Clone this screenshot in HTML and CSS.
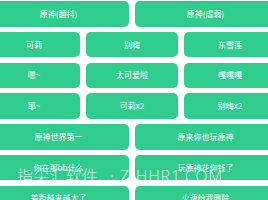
FILE: index.html
```html
<!DOCTYPE html>
<html lang="zh">
<head>
<meta charset="utf-8">
<link rel="stylesheet" href="styles.css">
</head>
<body>
<div class="board">
  <div class="btn half">原神(翻抖)</div>
  <div class="btn half">原神(虐弱)</div>
  <div class="btn third">可莉</div>
  <div class="btn third">别嗨</div>
  <div class="btn third">东雪莲</div>
  <div class="btn third">嗯~</div>
  <div class="btn third">太可爱啦</div>
  <div class="btn third">嘎嘎嘎</div>
  <div class="btn third">耶~</div>
  <div class="btn third">可莉x2</div>
  <div class="btn third">别嗨x2</div>
  <div class="btn half">原神世界第一</div>
  <div class="btn half">原来你也玩原神</div>
  <div class="btn half">你在那bb什么</div>
  <div class="btn half">玩原神花你钱了</div>
  <div class="btn half">差距越来越大了</div>
  <div class="btn half">火速给我删除</div>
</div>
<div class="watermark"><span class="wm-cn">指尖汇软件</span><span class="wm-dot">·</span><span class="wm-en">ZIHHR1.COM</span></div>
</body>
</html>
```
FILE: styles.css
```css
html, body {
  margin: 0;
  padding: 0;
  width: 268px;
  height: 200px;
  overflow: hidden;
  background: #ffffff;
}
body {
  position: relative;
  font-family: "Noto Sans CJK SC", "Noto Sans", sans-serif;
}
.board {
  width: 288px;
  margin-left: -12px;
  padding-top: 1px;
  display: grid;
  grid-template-columns: repeat(6, 1fr);
  grid-auto-rows: 25.5px;
  column-gap: 6px;
  row-gap: 5.25px;
}
.btn {
  background: #2fcc8e;
  color: #ffffff;
  border-radius: 5px;
  display: flex;
  align-items: center;
  justify-content: center;
  font-size: 8px;
  line-height: 1;
  white-space: nowrap;
}
.half { grid-column: span 3; }
.third { grid-column: span 2; }
.watermark {
  position: absolute;
  left: 17px;
  top: 163px;
  display: flex;
  align-items: baseline;
  font-size: 16px;
  font-weight: 300;
  color: rgba(242, 244, 243, 0.85);
  white-space: nowrap;
  font-family: "Noto Sans CJK SC", "Noto Sans", sans-serif;
}
.wm-cn { letter-spacing: 0.2px; }
.wm-dot {
  width: 16px;
  margin-left: 6px;
  text-align: center;
  font-family: "Noto Sans", sans-serif;
}
.wm-en { letter-spacing: 0.8px; font-family: "Noto Sans", sans-serif; }
```
